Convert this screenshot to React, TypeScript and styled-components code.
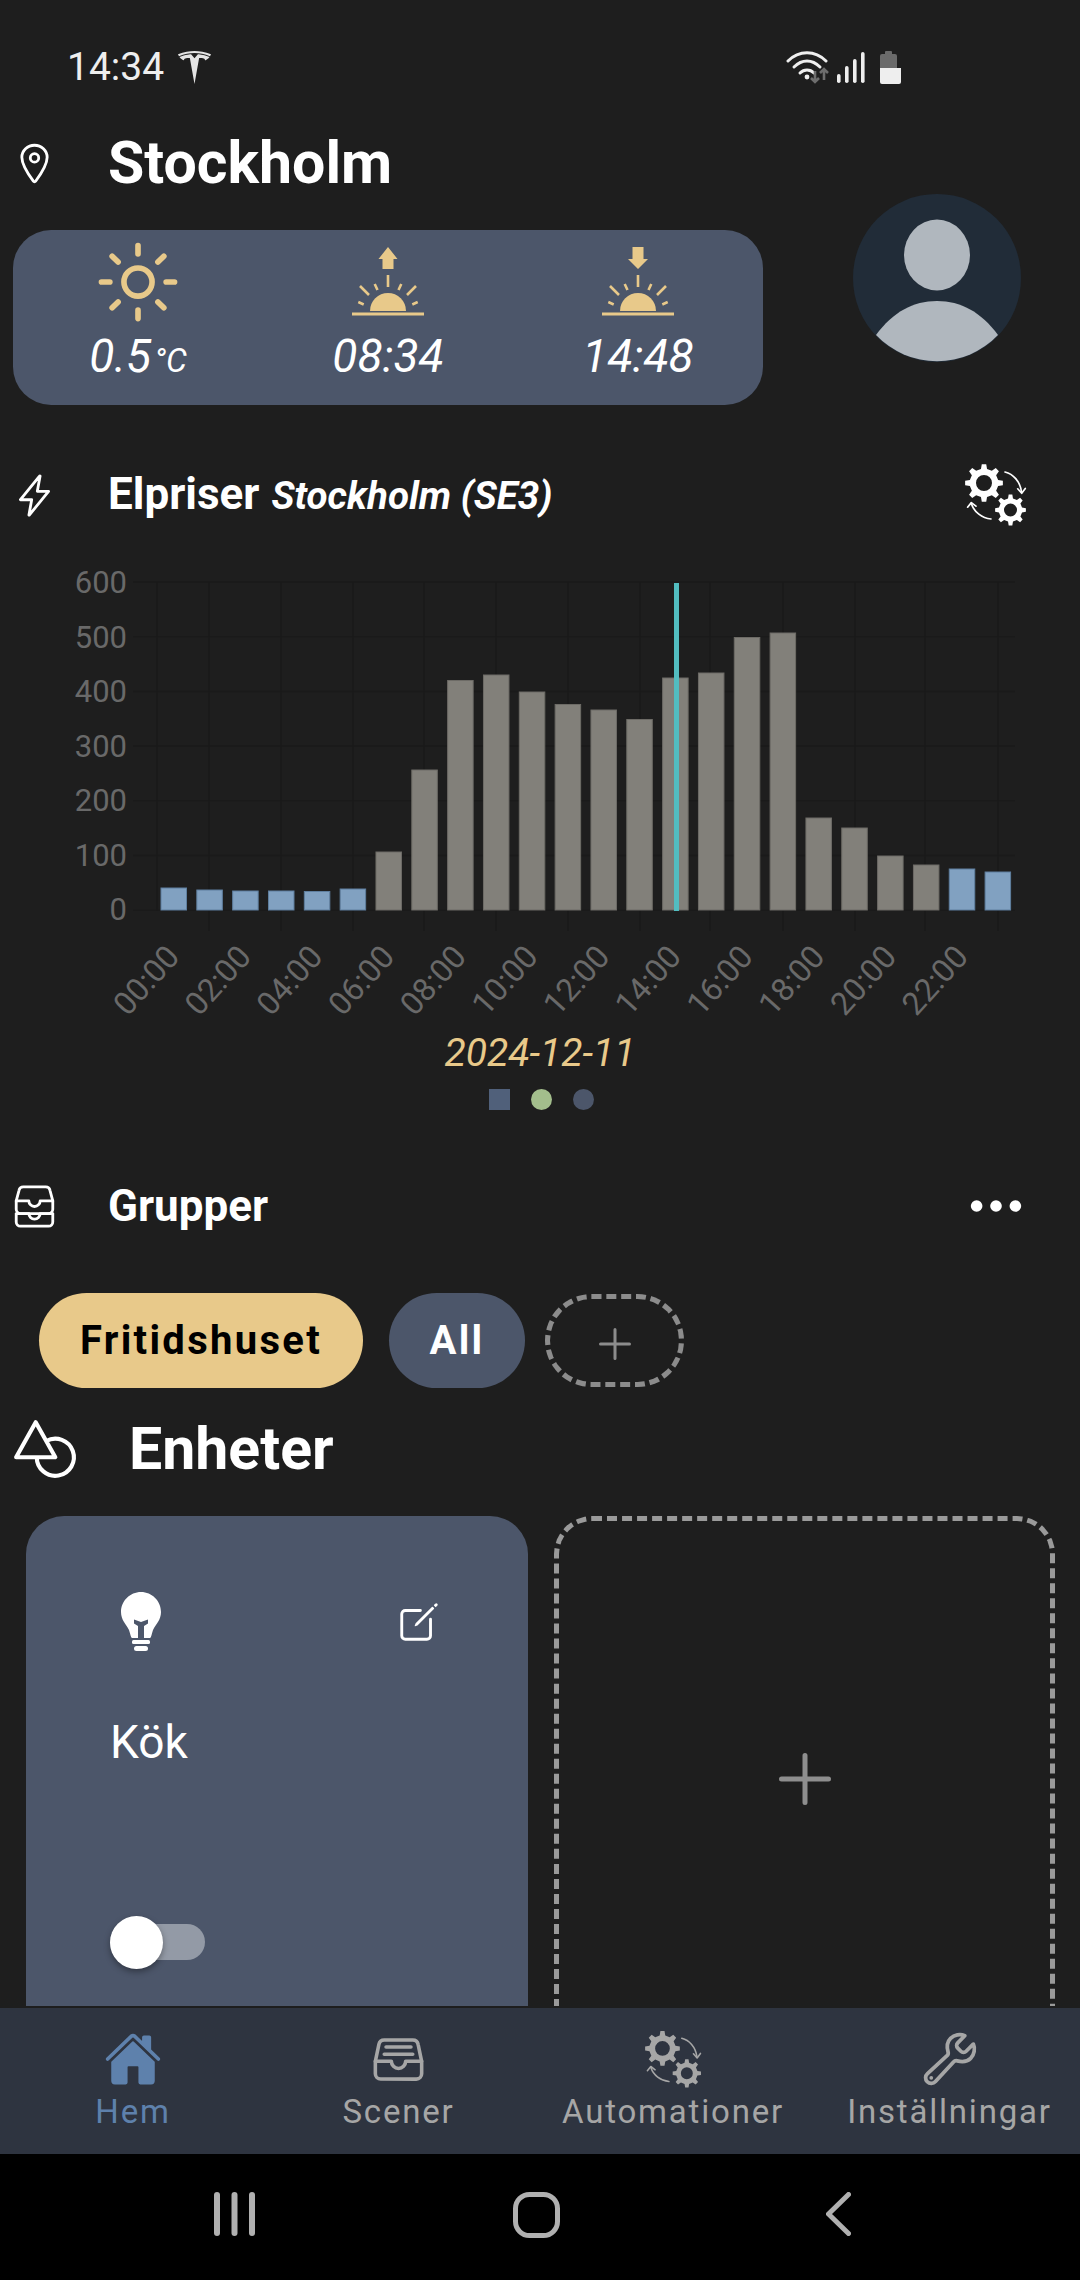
import React from 'react';
import styled, { createGlobalStyle } from 'styled-components';
import {
  IoLocationOutline, IoFlashOutline, IoFileTrayStackedOutline, IoShapesOutline,
  IoEllipsisHorizontal, IoCreateOutline, IoHome, IoFileTrayFullOutline, IoBuildOutline, IoSunnyOutline,
} from 'react-icons/io5';
import { SiTesla } from 'react-icons/si';

const Global = createGlobalStyle`
  html, body { margin: 0; padding: 0; background: #1e1e1e; }
  * { box-sizing: border-box; }
  body { font-family: Roboto, "Liberation Sans", sans-serif; color: #fff; }
`;

const gold = '#e8c98a';
const slate = '#4c566a';

const Screen = styled.div`
  width: 1080px; height: 2280px; display: flex; flex-direction: column; background: #1e1e1e; overflow: hidden;
`;
const Main = styled.main`
  flex: 0 0 2006px; overflow: hidden; margin-bottom: 2px;
`;
const StatusBar = styled.div`
  height: 130px; padding: 46px 0 0 67px; display: flex; align-items: flex-start;
`;
const Clock = styled.span`
  font-size: 39px; line-height: 42px; color: #eeeeee; width: 111px;
`;
const TeslaMark = styled.span`
  display: flex; margin-top: 5px; color: #e4e4e4;
`;
const StatusRight = styled.div`
  margin-left: 575px; display: flex; align-items: flex-start; margin-top: 5px;
`;
const Hero = styled.section`
  display: flex; align-items: flex-start;
`;
const HeroLeft = styled.div`
  width: 763px;
`;
const Avatar = styled.svg`
  margin: 64px 0 0 90px; flex: none;
`;
const TitleRow = styled.div`
  height: 66px; padding-left: 12px; display: flex; align-items: center;
`;
const RowIcon = styled.span<{ $w?: number }>`
  width: ${p => p.$w ?? 45}px; flex: none; display: flex; align-items: center; justify-content: center; color: #fff;
`;
const PageTitle = styled.h1`
  margin: 0 0 0 51px; font-size: 59px; line-height: 66px; font-weight: 700; color: #fff;
`;
const WeatherCard = styled.div`
  margin: 34px 0 0 13px; width: 750px; height: 175px; border-radius: 38px; background: ${slate};
  padding-top: 7px; display: grid; grid-template-columns: repeat(3, 250px);
`;
const WeatherItem = styled.div`
  display: flex; flex-direction: column; align-items: center;
`;
const WeatherIcon = styled.div`
  height: 90px; display: flex; align-items: center; justify-content: center; color: ${gold};
`;
const WeatherValue = styled.div`
  margin-top: 3px; font-size: 46px; line-height: 52px; font-style: italic; color: #fff; white-space: nowrap;
`;
const Unit = styled.span`
  font-size: 33px; margin-left: 3px;
`;
const SectionRow = styled.div<{ $top: number }>`
  margin-top: ${p => p.$top}px; height: 60px; padding: 0 53px 0 12px; display: flex; align-items: center;
`;
const SectionTitle = styled.h2`
  margin: 0 0 0 51px; font-size: 44px; line-height: 60px; font-weight: 700; color: #fff; white-space: nowrap;
`;
const SectionSub = styled.span`
  font-size: 38.5px; font-style: italic; margin-left: 12px;
`;
const SectionAction = styled.span`
  margin-left: auto; display: flex; align-items: center; color: #fff;
`;
const Chart = styled.svg`
  display: block; margin-top: 35px;
`;
const AxisText = styled.text<{ $size: number }>`
  font-family: Roboto, sans-serif; font-size: ${p => p.$size}px; fill: #696969;
`;
const DateLabel = styled.div`
  height: 46px; line-height: 46px; text-align: center; font-size: 39px; font-style: italic; color: ${gold};
`;
const Pager = styled.div`
  margin-top: 13px; padding-left: 2px; display: flex; justify-content: center; gap: 21px;
`;
const PagerDot = styled.span<{ $color: string; $square?: boolean }>`
  width: 21px; height: 21px; background: ${p => p.$color}; border-radius: ${p => (p.$square ? 0 : '50%')};
`;
const Chips = styled.div`
  margin-top: 57px; padding-left: 39px; display: flex; gap: 26px; align-items: center;
`;
const Chip = styled.div<{ $active?: boolean }>`
  height: 95px; border-radius: 48px; display: flex; align-items: center; justify-content: center;
  font-size: 40px; font-weight: 700; letter-spacing: 2.3px;
  width: ${p => (p.$active ? 324 : 136)}px;
  background: ${p => (p.$active ? gold : slate)};
  color: ${p => (p.$active ? '#000' : '#fff')};
`;
const AddChip = styled.div`
  margin-left: -6px; width: 139px; height: 93px; border-radius: 47px; border: 5px dashed #8c8c8c;
  display: flex; align-items: center; justify-content: center; padding-top: 6px;
`;
const EnhetRow = styled.div`
  margin-top: 26px; height: 70px; padding-left: 12px; display: flex; align-items: center;
`;
const Cards = styled.div`
  margin-top: 32px; padding-left: 26px; display: grid; grid-template-columns: 502px 501px; gap: 26px;
`;
const DeviceCard = styled.div`
  height: 620px; border-radius: 38px; background: ${slate}; padding: 76px 89px 0 84px;
`;
const DeviceTop = styled.div`
  display: flex; justify-content: space-between; align-items: flex-start;
`;
const BulbIcon = styled.svg`
  display: block; margin-left: 11px;
`;
const EditIcon = styled.span`
  display: flex; margin: 7px -3px 0 0; color: #fff;
`;
const DeviceName = styled.div`
  margin-top: 64px; font-size: 46px; line-height: 52px; color: #fff;
`;
const Toggle = styled.div`
  position: relative; margin-top: 156px; width: 95px; height: 36px; border-radius: 18px; background: #939aa6;
`;
const Thumb = styled.span`
  position: absolute; left: 0; top: -8px; width: 53px; height: 53px; border-radius: 50%; background: #fff;
  box-shadow: 0 3px 6px rgba(0,0,0,.35);
`;
const AddCard = styled.div`
  height: 620px; border-radius: 38px; border: 5px dashed #9a9a9a; padding-top: 232px;
  display: flex; justify-content: center; align-items: flex-start;
`;
const BottomNav = styled.nav`
  flex: 0 0 146px; background: #2e3440; display: grid; grid-template-columns: 266px 265px 284px 1fr;
`;
const NavItem = styled.div<{ $active?: boolean; $shift?: number }>`
  padding: 21px 0 0 ${p => p.$shift ?? 0}px; display: flex; flex-direction: column; align-items: center;
  color: ${p => (p.$active ? '#5e81ac' : '#a6a6a6')};
`;
const NavIcon = styled.span`
  height: 60px; display: flex; align-items: center; justify-content: center;
`;
const NavLabel = styled.span`
  margin-top: 3px; font-size: 33px; line-height: 40px; letter-spacing: 1.8px; white-space: nowrap;
`;
const SystemBar = styled.div`
  flex: 1; background: #000; display: grid; grid-template-columns: 214px 41px 258px 47px 266px 25px 1fr;
  padding-top: 38px;
`;
const Spacer = styled.span``;

const PlusMark = ({ size, width, color }: { size: number; width: number; color: string }) => (
  <svg width={size} height={size} viewBox={`0 0 ${size} ${size}`} fill="none" stroke={color} strokeWidth={width} strokeLinecap="round">
    <path d={`M${size / 2} ${width / 2}V${size - width / 2}M${width / 2} ${size / 2}H${size - width / 2}`} />
  </svg>
);

const gearPath = (cx: number, cy: number, ro: number, hole: number, teeth = 8) => {
  const ri = ro * 0.76;
  const period = (Math.PI * 2) / teeth;
  const pts: string[] = [];
  for (let t = 0; t < teeth; t++) {
    const a = t * period - Math.PI / 2;
    [[-0.27, ri], [-0.15, ro], [0.15, ro], [0.27, ri]].forEach(([d, r]) => {
      const ang = a + d * period;
      pts.push(`${(cx + r * Math.cos(ang)).toFixed(2)} ${(cy + r * Math.sin(ang)).toFixed(2)}`);
    });
  }
  return `M${pts.join('L')}ZM${cx - hole} ${cy}a${hole} ${hole} 0 1 0 ${hole * 2} 0a${hole} ${hole} 0 1 0 ${-hole * 2} 0Z`;
};

const GearsIcon = ({ size }: { size: number }) => (
  <svg width={size} height={size} viewBox="0 0 62 62" fill="none">
    <path d={gearPath(19, 19, 19, 8)} fill="currentColor" fillRule="evenodd" />
    <path d={gearPath(45.5, 46, 15.5, 6.5)} fill="currentColor" fillRule="evenodd" />
    <g stroke="currentColor" strokeWidth={1.7} strokeLinecap="round" strokeLinejoin="round">
      <path d="M40 8C48 10 55 17 56.5 28" />
      <path d="M52.7 24.8L56.7 29.3L60.3 24.4" />
      <path d="M26 55C17 54 9 48 6.5 40" />
      <path d="M2.6 43.2L6.3 38.6L11 42.2" />
    </g>
  </svg>
);

const SunRays = () => (
  <g stroke={gold} strokeWidth={2.6} strokeLinecap="butt" fill="none">
    <path d="M36 28V40M8 39L17 48M64 39L55 48M22.7 37L25.5 43M49.3 37L46.5 43M6.3 55L11.7 57.5M65.7 55L60.3 57.5" />
  </g>
);

const SunHorizon = ({ direction }: { direction: 'up' | 'down' }) => (
  <svg width={72} height={70} viewBox="0 0 72 70">
    {direction === 'up' ? (
      <path d="M36 0L45.5 12H41.5V22H30.5V12H26.5Z" fill={gold} />
    ) : (
      <path d="M30.5 0H41.5V12H46L36 22L26 12H30.5Z" fill={gold} />
    )}
    <SunRays />
    <path d="M18 64A18 18 0 0 1 54 64Z" fill={gold} />
    <rect x={0} y={65.5} width={72} height={3} fill={gold} />
  </svg>
);

const bars = [888, 890, 891, 891, 891.5, 889, 852, 770, 680.5, 675, 692, 704.5, 710, 719.5, 678, 673, 637.5, 633, 818, 828, 856, 865, 869, 872];

const priceTicks = [600, 500, 400, 300, 200, 100, 0];
const gridX = [157, 209, 281, 353, 424, 496, 568, 640, 710, 783, 855, 925, 998];

const PriceChart = () => (
  <Chart width={1080} height={470} viewBox="0 560 1080 470">
    {priceTicks.map((t, i) => {
      const y = 582 + i * 54.7;
      return (
        <g key={t}>
          <line x1={133} x2={1015} y1={y} y2={y} stroke="#1a1a1a" strokeWidth={1.5} />
          <AxisText $size={31} x={127} y={593 + i * 54.5} textAnchor="end">{t}</AxisText>
        </g>
      );
    })}
    {gridX.map((x, i) => (
      <line key={x} x1={x} x2={x} y1={582} y2={i === 0 ? 911 : 931} stroke="#1a1a1a" strokeWidth={1.5} />
    ))}
    {bars.map((top, i) => {
      const blue = i < 6 || i > 21;
      return (
        <rect
          key={i}
          x={161 + i * 35.83}
          y={top}
          width={25.5}
          height={910 - top}
          fill={blue ? '#81a1c1' : '#82807a'}
          stroke={blue ? '#5f7f9f' : '#6d6b66'}
          strokeWidth={1}
        />
      );
    })}
    <rect x={674} y={583} width={5} height={328} fill="#52bdc0" />
    {Array.from({ length: 12 }, (_, i) => {
      const x = 181 + i * 71.7;
      const y = 958;
      return (
        <AxisText $size={32} key={i} x={x} y={y} textAnchor="end" transform={`rotate(-48 ${x} ${y})`}>
          {`${String(i * 2).padStart(2, '0')}:00`}
        </AxisText>
      );
    })}
  </Chart>
);

export default function App() {
  return (
    <Screen>
      <Global />
      <Main>
        <StatusBar>
          <Clock>14:34</Clock>
          <TeslaMark><SiTesla size={33} /></TeslaMark>
          <StatusRight>
            <svg width={116} height={34} viewBox="0 0 116 34" fill="none">
              <g stroke="#eee" strokeWidth={3} strokeLinecap="round">
                <path d="M2 10C13 -1 29 -1 40 10" />
                <path d="M8 16C16 8 26 8 34 16" />
                <path d="M14 22C18 18 24 18 28 22" />
              </g>
              <circle cx={21} cy={26} r={2.4} fill="#eee" />
              <path d="M29 20V31M25 27L29 31L33 27" stroke="#6e6e6e" strokeWidth={2.6} fill="none" />
              <path d="M38 29V18M34 22L38 18L42 22" stroke="#6e6e6e" strokeWidth={2.6} fill="none" />
              <g fill="#eee">
                <rect x={51} y={23} width={3.6} height={9} rx={1.8} />
                <rect x={59} y={15} width={3.6} height={17} rx={1.8} />
                <rect x={67} y={8} width={3.6} height={24} rx={1.8} />
                <rect x={75} y={1} width={3.6} height={31} rx={1.8} />
              </g>
              <path d="M94 5a2 2 0 0 1 2-2h3V1a1 1 0 0 1 1-1h5a1 1 0 0 1 1 1v2h3a2 2 0 0 1 2 2v12H94Z" fill="#6a6a6a" />
              <path d="M94 17H115V31a2 2 0 0 1-2 2H96a2 2 0 0 1-2-2Z" fill="#eee" />
            </svg>
          </StatusRight>
        </StatusBar>
        <Hero>
          <HeroLeft>
            <TitleRow>
              <RowIcon><IoLocationOutline size={45} /></RowIcon>
              <PageTitle>Stockholm</PageTitle>
            </TitleRow>
            <WeatherCard>
              <WeatherItem>
                <WeatherIcon><IoSunnyOutline size={90} /></WeatherIcon>
                <WeatherValue>0.5<Unit>°C</Unit></WeatherValue>
              </WeatherItem>
              <WeatherItem>
                <WeatherIcon><SunHorizon direction="up" /></WeatherIcon>
                <WeatherValue>08:34</WeatherValue>
              </WeatherItem>
              <WeatherItem>
                <WeatherIcon><SunHorizon direction="down" /></WeatherIcon>
                <WeatherValue>14:48</WeatherValue>
              </WeatherItem>
            </WeatherCard>
          </HeroLeft>
          <Avatar width={168} height={168} viewBox="0 0 168 168">
            <circle cx={84} cy={84} r={84} fill="#212c38" />
            <ellipse cx={84} cy={61} rx={33} ry={35.5} fill="#b0b7be" />
            <path d="M23 141C40 118 60 107 84 107C108 107 128 118 145 141A84 84 0 0 1 23 141Z" fill="#b0b7be" />
          </Avatar>
        </Hero>
        <SectionRow $top={60}>
          <RowIcon><IoFlashOutline size={45} /></RowIcon>
          <SectionTitle>Elpriser<SectionSub>Stockholm (SE3)</SectionSub></SectionTitle>
          <SectionAction><GearsIcon size={62} /></SectionAction>
        </SectionRow>
        <PriceChart />
        <DateLabel>2024-12-11</DateLabel>
        <Pager>
          <PagerDot $color="#50607a" $square />
          <PagerDot $color="#a3be8c" />
          <PagerDot $color={slate} />
        </Pager>
        <SectionRow $top={66}>
          <RowIcon><IoFileTrayStackedOutline size={45} /></RowIcon>
          <SectionTitle>Grupper</SectionTitle>
          <SectionAction><IoEllipsisHorizontal size={62} /></SectionAction>
        </SectionRow>
        <Chips>
          <Chip $active>Fritidshuset</Chip>
          <Chip>All</Chip>
          <AddChip><PlusMark size={32} width={3} color="#8c8c8c" /></AddChip>
        </Chips>
        <EnhetRow>
          <RowIcon $w={66}><IoShapesOutline size={68} /></RowIcon>
          <PageTitle>Enheter</PageTitle>
        </EnhetRow>
        <Cards>
          <DeviceCard>
            <DeviceTop>
              <BulbIcon width={40} height={60} viewBox="0 0 40 60">
                <path d="M20 0C9 0 0 9 0 20C0 28 5 32 8 38C9 41 10 46 11 46H29C30 46 31 41 32 38C35 32 40 28 40 20C40 9 31 0 20 0Z" fill="#fff" />
                <path d="M13 27.5L20 30L27 27.5V31.5L23 34V46H17V34L13 31.5Z" fill={slate} />
                <rect x={11} y={48} width={18} height={4} rx={1.5} fill="#fff" />
                <rect x={13} y={54} width={14} height={5} rx={2.5} fill="#fff" />
              </BulbIcon>
              <EditIcon><IoCreateOutline size={46} /></EditIcon>
            </DeviceTop>
            <DeviceName>Kök</DeviceName>
            <Toggle><Thumb /></Toggle>
          </DeviceCard>
          <AddCard><PlusMark size={52} width={5} color="#8e8e8e" /></AddCard>
        </Cards>
      </Main>
      <BottomNav>
        <NavItem $active>
          <NavIcon><IoHome size={58} /></NavIcon>
          <NavLabel>Hem</NavLabel>
        </NavItem>
        <NavItem>
          <NavIcon><IoFileTrayFullOutline size={57} /></NavIcon>
          <NavLabel>Scener</NavLabel>
        </NavItem>
        <NavItem>
          <NavIcon><GearsIcon size={57} /></NavIcon>
          <NavLabel>Automationer</NavLabel>
        </NavItem>
        <NavItem $shift={4}>
          <NavIcon><IoBuildOutline size={60} /></NavIcon>
          <NavLabel>Inställningar</NavLabel>
        </NavItem>
      </BottomNav>
      <SystemBar>
        <Spacer />
        <svg width={41} height={44} viewBox="0 0 41 44" fill="#b0b0b0">
          <rect x={0} y={0} width={6} height={44} rx={3} />
          <rect x={17.5} y={0} width={6} height={44} rx={3} />
          <rect x={35} y={0} width={6} height={44} rx={3} />
        </svg>
        <Spacer />
        <svg width={47} height={46} viewBox="0 0 47 46" fill="none" stroke="#b0b0b0" strokeWidth={5}>
          <rect x={2.5} y={2.5} width={42} height={41} rx={14} />
        </svg>
        <Spacer />
        <svg width={25} height={44} viewBox="0 0 25 44" fill="none" stroke="#b0b0b0" strokeWidth={5} strokeLinecap="round" strokeLinejoin="round">
          <path d="M22.5 2.5L2.5 22L22.5 41.5" />
        </svg>
        <Spacer />
      </SystemBar>
    </Screen>
  );
}
